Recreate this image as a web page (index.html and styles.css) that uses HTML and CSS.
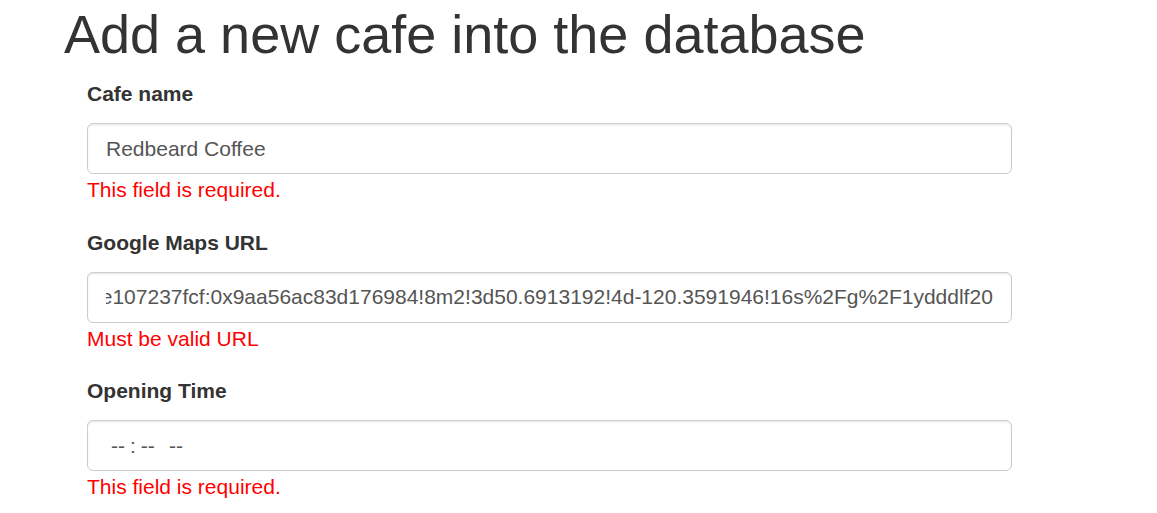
FILE: index.html
```html
<!DOCTYPE html>
<html lang="en">
<head>
<meta charset="utf-8">
<title>Add a new cafe</title>
<link rel="stylesheet" href="styles.css">
</head>
<body>
<div class="page">
  <h1 class="title">Add a new cafe into the database</h1>
  <form class="cafe-form" novalidate>
    <div class="form-group">
      <label class="field-label" for="cafe">Cafe name</label>
      <input class="form-control" id="cafe" type="text" value="Redbeard Coffee">
      <div class="field-error">This field is required.</div>
    </div>
    <div class="form-group">
      <label class="field-label" for="location">Google Maps URL</label>
      <input class="form-control" id="location" type="text" value="https://www.google.com/maps/place/Redbeard+Coffee/@50.6913192,-120.3591946,17z/data=!3m1!4b1!4m6!3m5!1s0x537e2c8e107237fcf:0x9aa56ac83d176984!8m2!3d50.6913192!4d-120.3591946!16s%2Fg%2F1ydddlf20">
      <div class="field-error">Must be valid URL</div>
    </div>
    <div class="form-group">
      <label class="field-label" for="open">Opening Time</label>
      <input class="form-control time-control" id="open" type="time">
      <div class="field-error">This field is required.</div>
    </div>
  </form>
</div>
<script src="script.js"></script>
</body>
</html>
```

FILE: styles.css
```css
html, body {
  margin: 0;
  padding: 0;
  background: #fff;
}

body {
  font-family: "Liberation Sans", Arial, Helvetica, sans-serif;
  color: #333;
}

.page {
  padding-left: 64px;
}

.title {
  margin: 5px 0 15px 0;
  font-size: 54px;
  line-height: 59px;
  font-weight: 400;
  color: #333;
}

.cafe-form {
  margin-left: 23px;
  width: 925px;
}

.form-group {
  display: flex;
  flex-direction: column;
  margin-bottom: 22.5px;
}

.field-label {
  font-size: 21px;
  line-height: 30px;
  font-weight: 700;
  color: #333;
  margin-bottom: 14px;
}

.form-control {
  box-sizing: border-box;
  height: 51px;
  width: 100%;
  padding: 0 18px;
  font-family: "Liberation Sans", Arial, Helvetica, sans-serif;
  font-size: 21px;
  color: #555;
  background: #fff;
  border: 1px solid #ccc;
  border-radius: 6px;
  box-shadow: inset 0 1.5px 1.5px rgba(0, 0, 0, 0.075);
  outline: none;
}

.time-control::-webkit-calendar-picker-indicator {
  display: none;
}

.time-control::-webkit-datetime-edit {
  padding: 0;
}

.time-control::-webkit-datetime-edit-fields-wrapper {
  padding: 0 0 0 4px;
}

.time-control::-webkit-datetime-edit-text {
  padding: 0 4px;
}

.field-error {
  margin-top: 1px;
  font-size: 21px;
  line-height: 30px;
  color: #f00;
}
```

FILE: script.js
```js
var url = document.getElementById('location');
url.scrollLeft = url.scrollWidth;
```
